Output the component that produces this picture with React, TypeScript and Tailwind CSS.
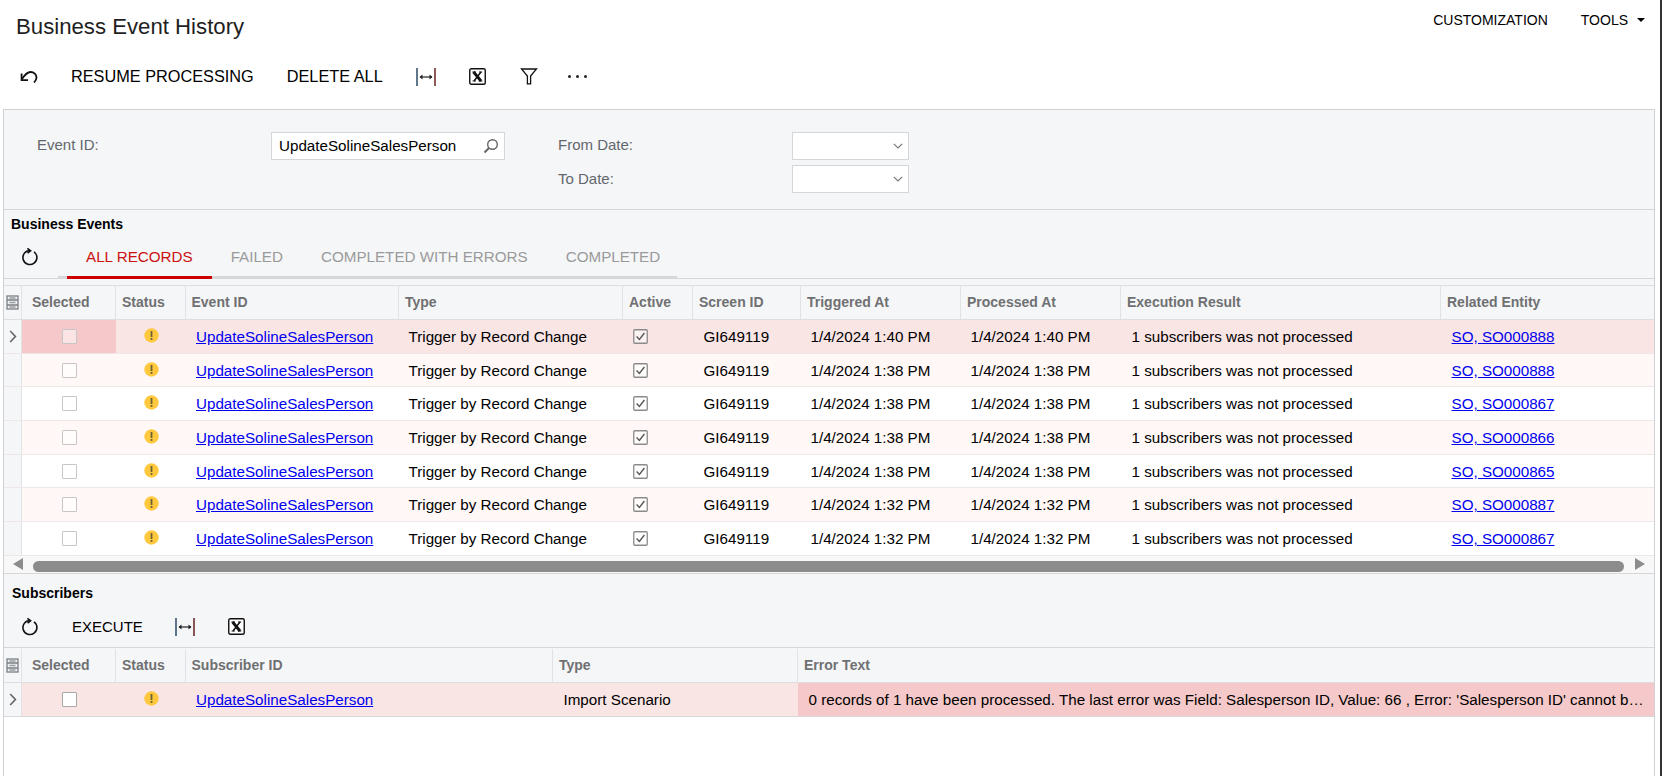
import React from "react";

const rows = [
  { date: "1/4/2024 1:40 PM", entity: "SO, SO000888" },
  { date: "1/4/2024 1:38 PM", entity: "SO, SO000888" },
  { date: "1/4/2024 1:38 PM", entity: "SO, SO000867" },
  { date: "1/4/2024 1:38 PM", entity: "SO, SO000866" },
  { date: "1/4/2024 1:38 PM", entity: "SO, SO000865" },
  { date: "1/4/2024 1:32 PM", entity: "SO, SO000887" },
  { date: "1/4/2024 1:32 PM", entity: "SO, SO000867" },
];

const eventCols = "grid grid-cols-[18px_94px_69.5px_213.5px_224px_70px_108px_160px_160px_320px_1fr]";
const subCols = "grid grid-cols-[18px_94px_69.5px_367.5px_245px_1fr]";

function UndoIcon() {
  return (
    <svg width="20" height="18" viewBox="0 0 20 18" fill="none" stroke="#111" strokeWidth="1.8">
      <path d="M3 11 C5 8 8 4 11.5 4 C15 4 17.5 6.5 17.5 9.5 C17.5 11.5 16.5 13 15 14.5" />
      <path d="M2.6 5.5 V12.2 H9" />
    </svg>
  );
}

function RefreshIcon() {
  return (
    <svg width="18" height="18" viewBox="0 0 18 18" fill="none" stroke="#111" strokeWidth="1.6">
      <path d="M13 3.8 A7 7 0 1 1 9 2.5" />
      <path d="M6.4 0.4 L9.6 2.7 L6.6 5.2" />
    </svg>
  );
}

function AutofitIcon() {
  return (
    <svg width="20" height="18" viewBox="0 0 20 18" fill="none">
      <path d="M1 0 V18" stroke="#1c3d5a" strokeWidth="1.4" />
      <path d="M19 0 V18" stroke="#5c1010" strokeWidth="1.4" />
      <path d="M4 9 H16" stroke="#222" strokeWidth="1.2" />
      <path d="M6.5 6.5 L3.5 9 L6.5 11.5 Z M13.5 6.5 L16.5 9 L13.5 11.5 Z" fill="#222" />
    </svg>
  );
}

function ExcelIcon() {
  return (
    <svg width="17" height="17" viewBox="0 0 17 17" fill="none">
      <rect x="0.75" y="0.75" width="15.5" height="15.5" rx="1.5" stroke="#111" strokeWidth="1.4" fill="#fff" />
      <path d="M4.6 4 L12 13" stroke="#111" strokeWidth="2.8" />
      <path d="M12 4 L5 13" stroke="#111" strokeWidth="1.5" />
      <path d="M3.4 4 H7 M10 4 H13.2 M3.6 13 H6.8 M9.8 13 H13.4" stroke="#111" strokeWidth="1" />
    </svg>
  );
}

function FilterIcon() {
  return (
    <svg width="18" height="17" viewBox="0 0 18 17" fill="none" stroke="#111" strokeWidth="1.3">
      <path d="M1.5 1 H16.5 L10.6 8 V15.8 H7.4 V8 Z" />
    </svg>
  );
}

function ColumnsIcon() {
  return (
    <svg width="13" height="15" viewBox="0 0 13 15" fill="none" stroke="#7b7f85" strokeWidth="1.3">
      <rect x="1" y="1" width="11" height="13" fill="#eef0f2" />
      <path d="M1 5 H12 M1 10 H12" />
      <path d="M3.5 3 H9.5 M3.5 7.5 H9.5 M3.5 12 H9.5" stroke="#9a9ea3" />
    </svg>
  );
}

function WarnIcon() {
  return (
    <svg width="15" height="15" viewBox="0 0 15 15" className="ml-[2px] -mt-[2px]">
      <circle cx="7.5" cy="7.5" r="7.2" fill="#ffc83d" />
      <rect x="6.6" y="3" width="1.8" height="6" fill="#6b6330" />
      <rect x="6.6" y="10" width="1.8" height="1.9" fill="#6b6330" />
    </svg>
  );
}

function RowChevron() {
  return (
    <svg width="8" height="13" viewBox="0 0 8 13" fill="none" stroke="#666" strokeWidth="1.6">
      <path d="M1.2 1 L6.4 6.5 L1.2 12" />
    </svg>
  );
}

function ChevronDown() {
  return (
    <svg width="10" height="6" viewBox="0 0 10 6" fill="none" stroke="#777" strokeWidth="1.2">
      <path d="M0.8 0.8 L5 5 L9.2 0.8" />
    </svg>
  );
}

function Checkbox({ checked, solid }: { checked?: boolean; solid?: boolean }) {
  if (checked) {
    return (
      <svg width="15" height="15" viewBox="0 0 15 15" fill="none" className="-ml-[1px] -mt-[2px]">
        <rect x="0.75" y="0.75" width="13.5" height="13.5" rx="1" stroke="#8b8b8b" strokeWidth="1.3" fill="#ffffff80" />
        <path d="M3.6 7.4 L6.4 10.4 L11.4 4" stroke="#555" strokeWidth="1.4" />
      </svg>
    );
  }
  return (
    <span
      className={
        solid
          ? "block w-[15px] h-[15px] border border-[#a8a8a8] bg-white rounded-[1px]"
          : "block w-[15px] h-[15px] border border-[#c6c6c6] bg-white/50 rounded-[1px]"
      }
    />
  );
}

function HeaderCell({ label, className = "" }: { label: string; className?: string }) {
  return (
    <div className={"flex items-center text-[14px] font-bold text-[#6f7072] border-r border-[#e0e2e5] whitespace-nowrap overflow-hidden " + (label === "Selected" ? "pl-[10px] " : "pl-[6px] ") + className}>
      {label}
    </div>
  );
}

function Cell({ children, bg = "", pad = "pl-[10.5px]" }: { children: React.ReactNode; bg?: string; pad?: string }) {
  return <div className={"flex items-center pt-[2px] whitespace-nowrap overflow-hidden " + pad + " " + bg}>{children}</div>;
}

function RowLink({ text }: { text: string }) {
  return <a className="text-[#0000ee] underline">{text}</a>;
}

function Tab({ label, active }: { label: string; active?: boolean }) {
  return (
    <div
      className={
        active
          ? "h-[34px] -mb-[3px] px-[19px] shrink-0 whitespace-nowrap border-b-[3px] border-[#cc0000] text-[#cc1111] text-[15.2px] leading-[24px]"
          : "h-[34px] -mb-[3px] px-[19px] shrink-0 whitespace-nowrap text-[#9a9a9a] text-[15.2px] leading-[24px]"
      }
    >
      {label}
    </div>
  );
}

export default function App() {
  return (
    <div className="flex w-[1662px] h-[776px] overflow-hidden bg-white text-black font-['Liberation_Sans',Arial,sans-serif] text-[15.2px]">
      <div className="w-[1660px] h-full flex flex-col">
        {/* Title bar */}
        <div className="h-[53px] flex justify-between shrink-0">
          <h1 className="pl-4 pt-[13px] text-[22.2px] leading-[28px] text-[#1f1f1f]">Business Event History</h1>
          <div className="flex pt-3 pr-[15px] text-[14px] leading-[16px]">
            <span className="mr-[33px]">CUSTOMIZATION</span>
            <span>TOOLS</span>
            <span className="ml-[9px] mt-[6px] w-0 h-0 border-x-[4.5px] border-x-transparent border-t-[4.5px] border-t-black" />
          </div>
        </div>

        {/* Main toolbar */}
        <div className="h-[47px] mb-[9px] shrink-0 flex items-center pl-[19px] text-[16.3px]">
          <UndoIcon />
          <span className="ml-[32px]">RESUME PROCESSING</span>
          <span className="ml-[33px]">DELETE ALL</span>
          <span className="ml-[33px] flex"><AutofitIcon /></span>
          <span className="ml-[33px] flex"><ExcelIcon /></span>
          <span className="ml-[34px] flex"><FilterIcon /></span>
          <span className="ml-[30px] flex gap-[5px]">
            <i className="block w-[3px] h-[3px] rounded-full bg-[#222]" />
            <i className="block w-[3px] h-[3px] rounded-full bg-[#222]" />
            <i className="block w-[3px] h-[3px] rounded-full bg-[#222]" />
          </span>
        </div>

        <div className="ml-[3px] w-[1652px] flex-1 min-h-0 flex flex-col border-x border-t border-[#cfd1d5] bg-white">
          {/* Filter form */}
          <div className="h-[100px] flex pt-[22px] bg-[#f5f6f8] border-b border-[#d5d7da] text-[#62676d] shrink-0">
            <label className="w-[267px] pl-[33px] leading-[26px] text-[15px]">Event ID:</label>
            <div className="w-[234px] h-[28px] flex items-center justify-between pl-[7px] pr-[5px] bg-white border border-[#d4d6da] text-black">
              UpdateSolineSalesPerson
              <svg width="16" height="16" viewBox="0 0 16 16" fill="none" stroke="#666" strokeWidth="1.4">
                <circle cx="9.5" cy="6.5" r="4.8" />
                <path d="M6 10 L1.5 14.5" strokeWidth="2" />
              </svg>
            </div>
            <div className="ml-[53px] flex flex-col gap-[5px] text-[15px]">
              <div className="flex h-[28px]">
                <label className="w-[234px] leading-[26px]">From Date:</label>
                <div className="w-[117px] flex items-center justify-end pr-[5px] bg-white border border-[#d4d6da]">
                  <ChevronDown />
                </div>
              </div>
              <div className="flex h-[28px]">
                <label className="w-[234px] leading-[28px]">To Date:</label>
                <div className="w-[117px] flex items-center justify-end pr-[5px] bg-white border border-[#d4d6da]">
                  <ChevronDown />
                </div>
              </div>
            </div>
          </div>

          {/* Business Events */}
          <div className="h-[69px] bg-[#f5f6f8] border-b border-[#d5d7da] shrink-0">
            <div className="h-[30px] pl-[7px] pt-[6px] text-[14px] leading-[17px] font-bold">Business Events</div>
            <div className="h-[38px] flex items-end">
              <div className="w-[54px] h-full flex items-center pl-[17px] pb-[4px]"><RefreshIcon /></div>
              <div className="flex w-[619px] border-b-2 border-[#d5d7da] pl-[9px]">
                <Tab label="ALL RECORDS" active />
                <Tab label="FAILED" />
                <Tab label="COMPLETED WITH ERRORS" />
                <Tab label="COMPLETED" />
              </div>
            </div>
          </div>
          <div className="h-[6px] bg-[#f5f6f8] shrink-0" />

          {/* Events grid */}
          <div className={eventCols + " h-[35px] bg-[#f5f6f8] border-y border-[#dcdee1] shrink-0"}>
            <div className="flex items-center justify-center border-r border-[#e0e2e5]"><ColumnsIcon /></div>
            {["Selected", "Status", "Event ID", "Type", "Active", "Screen ID", "Triggered At", "Processed At", "Execution Result"].map((h) => (
              <HeaderCell key={h} label={h} />
            ))}
            <HeaderCell label="Related Entity" className="border-r-0" />
          </div>
          {rows.map((r, i) => {
            const bg = i === 0 ? "bg-[#fae5e5]" : i % 2 === 1 ? "bg-[#fff8f7]" : "bg-white";
            return (
              <div key={i} className={eventCols + " h-[33.7px] shrink-0 border-b border-[#eee7e7] " + bg}>
                <div className="flex items-center justify-center bg-[#f5f6f8] border-r border-[#e0e2e5]">
                  {i === 0 && <RowChevron />}
                </div>
                <div className={"flex items-center justify-center " + (i === 0 ? "bg-[#f5c9c9]" : "")}>
                  <Checkbox />
                </div>
                <div className="flex items-center justify-center"><WarnIcon /></div>
                <Cell><RowLink text="UpdateSolineSalesPerson" /></Cell>
                <Cell pad="pl-[9.5px]">Trigger by Record Change</Cell>
                <Cell><Checkbox checked /></Cell>
                <Cell>GI649119</Cell>
                <Cell pad="pl-[9.5px]">{r.date}</Cell>
                <Cell pad="pl-[9.5px]">{r.date}</Cell>
                <Cell>1 subscribers was not processed</Cell>
                <Cell><RowLink text={r.entity} /></Cell>
              </div>
            );
          })}

          {/* Horizontal scrollbar */}
          <div className="h-[18px] shrink-0 flex items-center pl-[9px] bg-[#f8f8f9] border-b border-[#d5d7da]">
            <span className="w-0 h-0 border-y-[6px] border-y-transparent border-r-[10px] border-r-[#8c8c8c]" />
            <span className="ml-[10px] mt-[4px] w-[1591px] h-[11px] rounded-full bg-[#8c8c8c]" />
            <span className="ml-[11px] w-0 h-0 border-y-[6px] border-y-transparent border-l-[10px] border-l-[#8c8c8c]" />
          </div>

          {/* Subscribers */}
          <div className="h-[74px] shrink-0 bg-[#f5f6f8] border-b border-[#d5d7da]">
            <div className="h-[37px] pl-[8px] pt-[11px] text-[14px] leading-[17px] font-bold">Subscribers</div>
            <div className="h-[36px] flex items-center pl-[17px] pb-[4px] text-[15px]">
              <RefreshIcon />
              <span className="ml-[33px]">EXECUTE</span>
              <span className="ml-[32px] flex"><AutofitIcon /></span>
              <span className="ml-[33px] flex"><ExcelIcon /></span>
            </div>
          </div>
          <div className={subCols + " h-[35px] pt-[1px] shrink-0 bg-[#f5f6f8] border-b border-[#dcdee1]"}>
            <div className="flex items-center justify-center border-r border-[#e0e2e5]"><ColumnsIcon /></div>
            {["Selected", "Status", "Subscriber ID", "Type"].map((h) => (
              <HeaderCell key={h} label={h} />
            ))}
            <HeaderCell label="Error Text" className="border-r-0" />
          </div>
          <div className={subCols + " h-[34px] shrink-0 bg-[#fae5e5] border-b border-[#d5d7da]"}>
            <div className="flex items-center justify-center bg-[#f5f6f8] border-r border-[#e0e2e5]"><RowChevron /></div>
            <div className="flex items-center justify-center"><Checkbox solid /></div>
            <div className="flex items-center justify-center"><WarnIcon /></div>
            <Cell><RowLink text="UpdateSolineSalesPerson" /></Cell>
            <Cell>Import Scenario</Cell>
            <Cell bg="bg-[#f5c9c9]">
              0 records of 1 have been processed. The last error was Field: Salesperson ID, Value: 66 , Error: 'Salesperson ID' cannot b…
            </Cell>
          </div>
        </div>
      </div>
      <div className="w-[2px] h-full bg-[#333333]" />
    </div>
  );
}
